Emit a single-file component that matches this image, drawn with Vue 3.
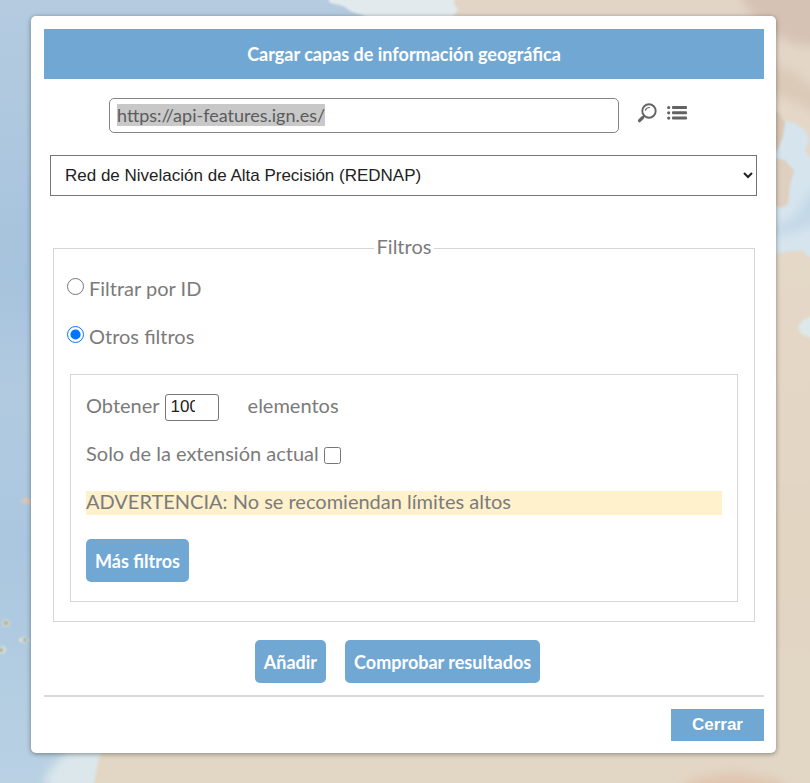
<script setup>
import { onMounted, ref } from 'vue'

const url = ref('https://api-features.ign.es/')
const layer = ref('rednap')
const filterMode = ref('others')
const limit = ref(100)
const onlyExtent = ref(false)

const urlInput = ref(null)

onMounted(() => {
  urlInput.value.focus()
  urlInput.value.select()
})
</script>

<template>
  <div class="page">
    <svg class="map" viewBox="0 0 810 783" preserveAspectRatio="none" aria-hidden="true">
      <defs>
        <linearGradient id="sea" x1="0" y1="0" x2="0" y2="1">
          <stop offset="0" stop-color="#b4cbe0" />
          <stop offset="0.1" stop-color="#b0c9df" />
          <stop offset="0.35" stop-color="#a6c3dd" />
          <stop offset="0.5" stop-color="#b1cae0" />
          <stop offset="0.7" stop-color="#aac7df" />
          <stop offset="1" stop-color="#b9d1e3" />
        </linearGradient>
        <linearGradient id="land" x1="0" y1="0" x2="0" y2="1">
          <stop offset="0" stop-color="#e1d5c6" />
          <stop offset="0.25" stop-color="#e5d9c9" />
          <stop offset="0.7" stop-color="#e2d5c2" />
          <stop offset="1" stop-color="#e2d7c6" />
        </linearGradient>
        <filter id="soft" x="-50%" y="-50%" width="200%" height="200%">
          <feGaussianBlur stdDeviation="5" />
        </filter>
        <filter id="edge" x="-50%" y="-50%" width="200%" height="200%">
          <feGaussianBlur stdDeviation="1" />
        </filter>
      </defs>
      <rect width="810" height="783" fill="url(#sea)" />
      <path d="M324 -10 L330 3 L343 6 L352 12 L362 15 L370 19 V40 H470 V-10 Z" fill="#e2eaee" filter="url(#edge)" />
      <path d="M54 790 L44 783 L48 772 L60 758 L80 740 L120 730 L110 790 Z" fill="#dbe7eb" filter="url(#soft)" />
      <path d="M456 -20 L454 4 L458 10 L452 17 L454 40 H600 V700 H112 L102 750 L98 762 L94 783 V800 H830 V-20 Z" fill="url(#land)" filter="url(#edge)" />
      <path d="M740 -20 L744 4 L752 14 L776 36 L796 44 L830 48 V-20 Z" fill="#d6c2b4" filter="url(#soft)" />
      <path d="M765 60 L795 72 L820 92 V116 L790 100 L765 92 Z" fill="#dccab8" filter="url(#soft)" />
      <path d="M770 114 L778 116 L786 121 L794 123 L805 130 L809 140 L805 152 L820 166 V258 L806 256 L804 251 L790 251 L770 255 Z" fill="#d5e4ed" filter="url(#edge)" />
      <path d="M820 185 L804 200 L798 214 L788 222 L770 228 V236 L794 232 L820 222 Z" fill="#c3d8e8" filter="url(#soft)" />
      <path d="M773 110 L779 113 L785 122 L783 136 L778 149 L773 154 Z" fill="#dac7b4" filter="url(#edge)" />
      <path d="M773 158 L785 160 L794 171 L790 184 L788 204 L781 208 L773 205 Z" fill="#dfcfbf" filter="url(#edge)" />
      <path d="M820 312 L803 320 L798 327 L801 334 L820 342 Z" fill="#dce8e9" filter="url(#edge)" />
      <path d="M670 800 L690 779 L735 772 L780 780 L790 800 Z" fill="#e0c6b1" filter="url(#soft)" />
      <path d="M20 502 L26 497 L32 501 V505 Z" fill="#dfc6b4" filter="url(#edge)" />
      <g filter="url(#edge)">
        <circle cx="6" cy="623" r="4" fill="#cbd5ce" />
        <circle cx="6" cy="623" r="2" fill="#b1aa8b" />
        <ellipse cx="24" cy="640" rx="5" ry="3" fill="#d6e0dc" />
        <circle cx="25" cy="640" r="2" fill="#aaa993" />
        <circle cx="2" cy="650" r="4" fill="#d2ddd9" />
        <circle cx="1" cy="650" r="2" fill="#aaa993" />
      </g>
    </svg>

    <main class="dialog">
      <h1 class="dialog-title">Cargar capas de información geográfica</h1>

      <div class="url-row">
        <input ref="urlInput" v-model="url" class="url-input" type="text" aria-label="URL" spellcheck="false" />
        <div class="url-actions">
          <button class="icon-button" type="button" aria-label="Buscar">
            <svg width="20" height="20" viewBox="0 0 20 20" fill="none" stroke="#636363">
              <circle cx="12" cy="8" r="6.700" stroke-width="1.900" />
              <path d="M8.400 7.200 Q9.500 4.400 12.400 4.500" stroke-width="1.200" stroke-linecap="round" />
              <path d="M7.300 12.700 L6 14" stroke-width="2" />
              <path d="M5.600 14.600 L2.500 17.700" stroke-width="3.200" stroke-linecap="round" />
            </svg>
          </button>
          <button class="icon-button" type="button" aria-label="Lista de servicios">
            <svg width="20" height="20" viewBox="0 0 20 20" fill="#636363">
              <circle cx="1.700" cy="4.500" r="1.600" />
              <circle cx="1.700" cy="9.800" r="1.600" />
              <circle cx="1.700" cy="15.100" r="1.600" />
              <rect x="5" y="3" width="15" height="3" rx="1" />
              <rect x="5" y="8.300" width="15" height="3" rx="1" />
              <rect x="5" y="13.600" width="15" height="3" rx="1" />
            </svg>
          </button>
        </div>
      </div>

      <select v-model="layer" class="layer-select" aria-label="Capa">
        <option value="rednap">Red de Nivelación de Alta Precisión (REDNAP)</option>
      </select>

      <fieldset class="filters">
        <legend>Filtros</legend>

        <label class="radio-row">
          <input v-model="filterMode" type="radio" name="filter" value="id" />
          Filtrar por ID
        </label>
        <label class="radio-row">
          <input v-model="filterMode" type="radio" name="filter" value="others" />
          Otros filtros
        </label>

        <div class="other-filters">
          <div class="filter-row">
            <label for="limit">Obtener</label>
            <input id="limit" v-model="limit" class="limit-input" type="number" />
            <span class="limit-unit">elementos</span>
          </div>
          <div class="filter-row">
            <label for="extent">Solo de la extensión actual</label>
            <input id="extent" v-model="onlyExtent" type="checkbox" />
          </div>
          <p class="warning">ADVERTENCIA: No se recomiendan límites altos</p>
          <button class="button" type="button">Más filtros</button>
        </div>
      </fieldset>

      <div class="actions">
        <button class="button" type="button">Añadir</button>
        <button class="button" type="button">Comprobar resultados</button>
      </div>

      <footer class="dialog-footer">
        <button class="close-button" type="button">Cerrar</button>
      </footer>
    </main>
  </div>
</template>

<style>
body {
  margin: 0;
}
</style>

<style scoped>
.page {
  position: relative;
  box-sizing: border-box;
  min-height: 100vh;
  padding: 16px 34px 30px 31px;
  overflow: hidden;
  font-family: Lato, "Noto Sans", sans-serif;
  font-size: 20px;
  line-height: 20px;
  color: #7b7b7b;
}

.map {
  position: absolute;
  inset: 0;
  width: 100%;
  height: 100%;
}

.dialog {
  position: relative;
  padding: 13px 12px 12px 13px;
  background: #fff;
  border-radius: 5px;
  box-shadow: 0 1px 5px rgba(0, 0, 0, 0.4);
}

.dialog-title {
  margin: 0;
  padding: 13px;
  background: #71a7d3;
  color: #fff;
  font-size: 18px;
  font-weight: 700;
  line-height: 24px;
  text-align: center;
}

/* URL */
.url-row {
  display: flex;
  gap: 18px;
  margin: 19px 77px 0 65px;
}

.url-input {
  flex: 1;
  box-sizing: border-box;
  min-width: 0;
  height: 35px;
  padding: 0 7px 2px;
  border: 1px solid #858585;
  border-radius: 5px;
  outline: none;
  font-family: inherit;
  font-size: 18px;
  color: #5c5c5c;
}

.url-input::selection {
  background: #c8c8c8;
  color: #5c5c5c;
}

.url-actions {
  display: flex;
  gap: 10px;
  padding-top: 5px;
}

.icon-button {
  width: 20px;
  height: 20px;
  padding: 0;
  border: 0;
  background: none;
}

.icon-button svg {
  display: block;
}

.layer-select {
  display: block;
  box-sizing: border-box;
  width: calc(100% - 13px);
  height: 41px;
  margin: 22px 6px 40px;
  padding: 0 5px 0 10px;
  border: 1px solid #767676;
  border-radius: 0;
  background: #fff;
  font-family: "Liberation Sans", Arial, sans-serif;
  font-size: 17px;
  color: #222;
}

/* FILTERS */
.filters {
  min-width: 0;
  margin: 0 9px;
  padding: 18px 13px 19px;
  border: 1px solid #d6d6d6;
}

.filters legend {
  margin: 0 auto;
  padding: 0 3px 4px;
}

.radio-row {
  display: flex;
  gap: 5px;
  height: 24px;
  margin-bottom: 24px;
}

.radio-row input,
.filter-row input[type="checkbox"] {
  width: 17px;
  height: 17px;
  margin: 0;
}

.other-filters {
  display: flex;
  flex-direction: column;
  align-items: flex-start;
  gap: 24px;
  margin: 0 3px;
  padding: 20px 15px 19px;
  border: 1px solid #d6d6d6;
}

.filter-row {
  display: flex;
  align-items: center;
  gap: 5px;
  height: 24px;
}

.filter-row label,
.limit-unit,
.warning {
  padding-bottom: 4px;
}

.limit-input {
  box-sizing: border-box;
  width: 54px;
  height: 27px;
  padding: 0 8px 0 5px;
  border: 1px solid #767676;
  border-radius: 3px;
  font-family: "Liberation Sans", Arial, sans-serif;
  font-size: 17px;
  color: #222;
}

.limit-unit {
  margin-left: 24px;
}

.warning {
  align-self: stretch;
  margin: 0;
  background: #fff1cc;
}

/* BUTTONS */
.button {
  height: 43px;
  padding: 0 9px;
  border: 0;
  border-radius: 5px;
  background: #71a7d3;
  color: #fff;
  font-family: inherit;
  font-size: 18px;
  font-weight: 700;
}

.actions {
  display: flex;
  justify-content: center;
  gap: 19px;
  margin: 18px 13px 12px 0;
}

.dialog-footer {
  display: flex;
  justify-content: flex-end;
  padding-top: 12px;
  border-top: 2px solid #d9d9d9;
}

.close-button {
  height: 32px;
  padding: 0 21px;
  border: 0;
  background: #71a7d3;
  color: #fff;
  font-family: "Liberation Sans", Arial, sans-serif;
  font-size: 17px;
  font-weight: 700;
}
</style>
